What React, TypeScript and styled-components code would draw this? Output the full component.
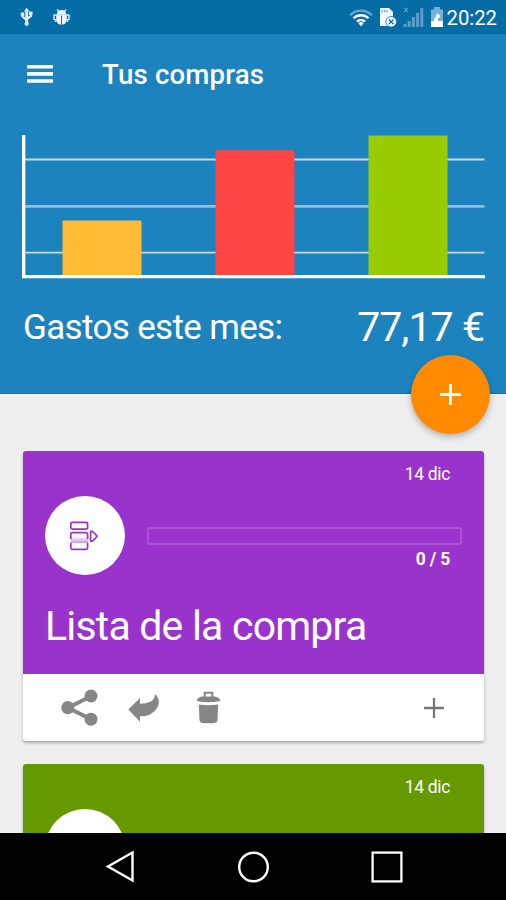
import React from "react";
import styled, { createGlobalStyle } from "styled-components";

const GlobalStyle = createGlobalStyle`
  * { box-sizing: border-box; }
  body { margin: 0; background: #eee; }
  svg { display: block; }
  button { border: 0; padding: 0; background: none; cursor: pointer; }
`;

const Screen = styled.div`
  display: flex;
  flex-direction: column;
  width: 506px;
  height: 900px;
  overflow: hidden;
  background: #eeeeee;
  color: #fff;
  font-family: Roboto, "Liberation Sans", sans-serif;
`;

const StatusBar = styled.div`
  display: flex;
  flex: none;
  justify-content: space-between;
  align-items: center;
  height: 34px;
  padding: 0 9px 0 20px;
  background: #056ca6;
`;

const StatusGroup = styled.div<{ $gap: number }>`
  display: flex;
  align-items: center;
  gap: ${(p) => p.$gap}px;
`;

const StatusIcons = styled(StatusGroup)`
  padding-top: 1px;
`;

const Clock = styled.span`
  font-size: 20.3px;
  line-height: 34px;
  margin: 1px 0 0 -4px;
`;

const Header = styled.header`
  position: relative;
  flex: none;
  height: 360px;
  background: #1c83be;
  border-bottom: 1px solid #0b78b6;
`;

const AppBar = styled.div`
  display: flex;
  align-items: center;
  height: 80px;
  padding-left: 27px;
`;

const MenuButton = styled.button`
  width: 26px;
  height: 18px;
`;

const Title = styled.h1`
  margin: 2px 0 0 49px;
  font-size: 27.6px;
  font-weight: 500;
  line-height: 40px;
  letter-spacing: 0.2px;
  white-space: nowrap;
`;

const ChartArea = styled.div`
  margin: 21px 0 0 22px;
  height: 144px;
`;

const Summary = styled.div`
  display: flex;
  justify-content: space-between;
  height: 60px;
  margin-top: 18px;
  padding: 0 22px 0 23px;
  white-space: nowrap;
`;

const SummaryLabel = styled.span`
  font-size: 35px;
  letter-spacing: -0.66px;
  line-height: 61px;
`;

const SummaryAmount = styled.span`
  font-size: 41px;
  letter-spacing: -0.95px;
  line-height: 61px;
`;

const AddFab = styled.button`
  position: absolute;
  right: 16px;
  bottom: -41px;
  z-index: 1;
  display: flex;
  align-items: center;
  justify-content: center;
  width: 79px;
  height: 79px;
  border-radius: 50%;
  background: #ff8a00;
  box-shadow: 0 3px 6px rgba(0, 0, 0, 0.26);
`;

const Lists = styled.main`
  display: flex;
  flex: 1;
  flex-direction: column;
  gap: 23px;
  min-height: 0;
  overflow: hidden;
  padding: 57px 22px 0 23px;
`;

const Card = styled.article`
  flex: none;
  height: 290px;
  border-radius: 3px;
  background: #fff;
  box-shadow: 0 2px 3px rgba(0, 0, 0, 0.28);
`;

const CardTop = styled.div<{ $color: string }>`
  height: 223px;
  padding: 12px 22px 0;
  border-radius: 3px 3px 0 0;
  background: ${(p) => p.$color};
`;

const CardDate = styled.div`
  height: 24px;
  padding-right: 12px;
  font-size: 17.5px;
  letter-spacing: -0.35px;
  line-height: 23px;
  text-align: right;
`;

const ProgressRow = styled.div`
  display: flex;
  gap: 22px;
  height: 80px;
  margin-top: 9px;
`;

const Avatar = styled.div`
  display: flex;
  flex: none;
  align-items: center;
  justify-content: center;
  width: 80px;
  height: 79px;
  padding-right: 2px;
  border-radius: 50%;
  background: #fff;
`;

const ProgressColumn = styled.div`
  flex: 1;
  padding-top: 31px;
`;

const ProgressTrack = styled.div`
  height: 18px;
  border: 2px solid rgba(255, 255, 255, 0.16);
  border-radius: 3px;
`;

const ProgressCount = styled.div`
  padding-right: 12px;
  margin-top: 2px;
  font-size: 17.5px;
  font-weight: 700;
  letter-spacing: -0.2px;
  line-height: 24px;
  text-align: right;
`;

const CardTitle = styled.h2`
  margin: 22px 0 0;
  font-size: 41px;
  font-weight: 400;
  letter-spacing: -0.8px;
  line-height: 56px;
  white-space: nowrap;
`;

const CardActions = styled.div`
  display: flex;
  align-items: center;
  height: 67px;
  padding: 0 40px 0 38px;
`;

const ActionButton = styled.button<{ $gap?: number; $end?: boolean }>`
  margin-left: ${(p) => (p.$end ? "auto" : `${p.$gap ?? 0}px`)};
`;

const NavBar = styled.nav`
  display: flex;
  flex: none;
  justify-content: space-between;
  align-items: center;
  height: 67px;
  padding: 0 103px 0 105px;
  background: #000;
`;

const UsbIcon = () => (
  <svg width="13" height="20" viewBox="0 0 13 20" fill="none" stroke="#e4edf8">
    <path d="M6.7 3v13" strokeWidth="2.8" />
    <path d="M2.5 7v2.5L6.500 13M11 6v3L6.800 12" strokeWidth="2.2" />
    <path d="M4 4.5 6.7.5l2.700 4zM.8 5.500h3.500V9H.8zM9 4.500h3.500V8H9z" fill="#e4edf8" stroke="none" />
    <circle cx="6.7" cy="16.8" r="2.1" fill="#e4edf8" stroke="none" />
  </svg>
);

const BugIcon = () => (
  <svg width="17" height="18" viewBox="0 0 17 18">
    <path d="M4 1.5l2 2.3M13 1.500l-2 2.300M1 7h15M1 6.500v5.500M16 6.500v5.500M2.500 14v-3M14.500 14v-3" stroke="#d8e5f4" strokeWidth="1.5" />
    <path d="M3.800 6.500a4.700 4.600 0 0 1 9.400 0z" fill="#f3f7fd" />
    <path d="M3.200 7.300h4.800v9.400a5 5 0 0 1-4.800-5zM9 7.300h4.800v4.400a5 5 0 0 1-4.800 5z" fill="#f3f7fd" />
  </svg>
);

const WifiIcon = () => (
  <svg width="24" height="18" viewBox="0 0 24 18" fill="none">
    <path d="M1 6.3a15.5 15.5 0 0 1 22 0" stroke="#6ba9d2" strokeWidth="2.2" />
    <path d="M4.5 9.3a10.7 10.7 0 0 1 15 0M8 12.6a5.8 5.8 0 0 1 8 0" stroke="#fff" strokeWidth="2.3" />
    <path d="m9.4 14.2 2.6 3 2.6-3a4 4 0 0 0-5.2 0z" fill="#fff" />
  </svg>
);

const SimIcon = () => (
  <svg width="18" height="21" viewBox="0 0 18 21">
    <path d="M1 1h9l4 4v14H1z" fill="#f4f8fd" />
    <path d="M3.2 3v2.4M5.6 3v2.4M8 3v2.4" stroke="#6da5cd" strokeWidth="1.2" />
    <circle cx="12.200" cy="14.800" r="5.300" fill="#f4f8fd" stroke="#056ca6" strokeWidth="0.8" />
    <path d="m9.900 12.500 4.600 4.600m0-4.600-4.600 4.600" stroke="#056ca6" strokeWidth="1.3" />
  </svg>
);

const SignalIcon = () => (
  <svg width="21" height="21" viewBox="0 0 21 21">
    <path d="m1.300 .8 3.400 4.400m0-4.400-3.400 4.400" stroke="#5b9dca" strokeWidth="1.2" />
    <path d="M.5 17h3v3h-3zM4.700 14h3v6h-3zM8.900 10h3v10h-3zM13.100 6h3v14h-3zM17.300 1h3v19h-3z" fill="#5b9dca" />
  </svg>
);

const BatteryIcon = () => (
  <svg width="14" height="21" viewBox="0 0 14 21">
    <path d="M4 0h6v2.5h3V15H1V2.5h3z" fill="#78afd4" />
    <path d="M1 14h3.2v-3h1.5V8.6L8 6.2l1.8 2.4V11h-2v3H13v6H1z" fill="#fff" />
  </svg>
);

const MenuIcon = () => (
  <svg width="26" height="18" viewBox="0 0 26 18" fill="#fff">
    <rect width="26" height="3.6" rx=".6" />
    <rect y="7.1" width="26" height="3.6" rx=".6" />
    <rect y="14.2" width="26" height="3.6" rx=".6" />
  </svg>
);

const PlusIcon = ({ size, color, weight }: { size: number; color: string; weight: number }) => (
  <svg width={size} height={size} viewBox={`0 0 ${size} ${size}`}>
    <path
      d={`M${size / 2} 0v${size}M0 ${size / 2}h${size}`}
      stroke={color}
      strokeWidth={weight}
    />
  </svg>
);

const bars = [
  { x: 40.5, top: 85.5, color: "#ffbb33" },
  { x: 193.5, top: 15.3, color: "#ff4444" },
  { x: 346.5, top: 0.5, color: "#99cc00" },
];

const SpendingChart = () => (
  <svg width="463" height="144" viewBox="0 0 463 144">
    <path d="M3 24.5h459.5M3 117.7h459.5" stroke="#c0dcf4" strokeWidth="1.8" />
    <path d="M3 71.3h459.5" stroke="#94bbe0" strokeWidth="2.8" />
    {bars.map((bar) => (
      <rect key={bar.color} x={bar.x} y={bar.top} width="79" height={141 - bar.top} fill={bar.color} />
    ))}
    <path d="M1.6 0v141.6H463" fill="none" stroke="#fff" strokeWidth="3.4" />
  </svg>
);

const ListIcon = ({ color }: { color: string }) => (
  <svg width="30" height="30" viewBox="0 0 30 30" fill="none" stroke={color} strokeWidth="1.7">
    <defs>
      <linearGradient id="fade" x1="0" y1="0" x2="0" y2="1">
        <stop offset="0" stopColor={color} stopOpacity="0.12" />
        <stop offset="1" stopColor={color} stopOpacity="0.5" />
      </linearGradient>
    </defs>
    <rect x="2" y="16.500" width="17" height="5.500" fill="url(#fade)" stroke="none" />
    <rect x="1.8" y="1.3" width="16.8" height="6.8" rx="1.5" />
    <path d="M1.8 18v-4.800q0-1.600 1.600-1.600H17q1.600 0 1.600 1.600V18M1.800 21.700v5q0 1.600 1.600 1.600H17q1.600 0 1.600-1.600v-5" />
    <path d="M21.600 10.300v9.800h1.800q2.200-1.800 4.800-4.900-2.600-3.100-4.800-4.900z" strokeLinejoin="round" />
  </svg>
);

const ShareIcon = () => (
  <svg width="37" height="37" viewBox="0 0 37 37" fill="#868686">
    <path d="M30 7.2 7 18.7l23 11.5" fill="none" stroke="#868686" strokeWidth="4" />
    <circle cx="6.8" cy="18.7" r="6.6" />
    <circle cx="30" cy="7" r="6.5" />
    <circle cx="30" cy="30.2" r="6.5" />
  </svg>
);

const ReplyIcon = () => (
  <svg width="32" height="28" viewBox="0 0 32 28" fill="#868686">
    <path d="M.3 15.500 12 4v5.800C20 9.500 27.500 7 26.700 0c4.500 3 6 10 1.300 15.500-4 5-9.500 7-16 6.800v5.500z" />
  </svg>
);

const TrashIcon = () => (
  <svg width="23" height="33" viewBox="0 0 23 33" fill="#868686">
    <path d="M7.700 6V1.700h7.600V6" fill="none" stroke="#868686" strokeWidth="2" />
    <path d="M0 10V8.700Q1 6 6 5.600h11q5 .4 6 3.100V10q-11.500 2.400-23 0z" />
    <path d="M1.800 13.500q9.700 1.300 19.400 0l-.7 15.800q-.3 2.500-3 2.700-6 .5-12 0-2.700-.2-3-2.700z" />
  </svg>
);

const BackIcon = () => (
  <svg width="31" height="33" viewBox="0 0 31 33">
    <path d="M27.500 2.500v28L3 16.500z" fill="none" stroke="#fff" strokeWidth="2.400" />
  </svg>
);

const HomeIcon = () => (
  <svg width="32" height="32" viewBox="0 0 32 32">
    <circle cx="15.500" cy="16" r="14.300" fill="none" stroke="#fff" strokeWidth="2.400" />
  </svg>
);

const RecentsIcon = () => (
  <svg width="32" height="32" viewBox="0 0 32 32">
    <rect x="1.600" y="1.600" width="28.800" height="28.800" fill="none" stroke="#fff" strokeWidth="2.300" />
  </svg>
);

interface ShoppingList {
  name: string;
  date: string;
  count: string;
  color: string;
}

const shoppingLists: ShoppingList[] = [
  { name: "Lista de la compra", date: "14 dic", count: "0 / 5", color: "#9933cc" },
  { name: "", date: "14 dic", count: "", color: "#669900" },
];

const ShoppingCard = ({ list }: { list: ShoppingList }) => (
  <Card>
    <CardTop $color={list.color}>
      <CardDate>{list.date}</CardDate>
      <ProgressRow>
        <Avatar>
          <ListIcon color={list.color} />
        </Avatar>
        <ProgressColumn>
          <ProgressTrack />
          <ProgressCount>{list.count}</ProgressCount>
        </ProgressColumn>
      </ProgressRow>
      <CardTitle>{list.name}</CardTitle>
    </CardTop>
    <CardActions>
      <ActionButton><ShareIcon /></ActionButton>
      <ActionButton $gap={30}><ReplyIcon /></ActionButton>
      <ActionButton $gap={37}><TrashIcon /></ActionButton>
      <ActionButton $end><PlusIcon size={20} color="#777" weight={2.3} /></ActionButton>
    </CardActions>
  </Card>
);

export default function App() {
  return (
    <Screen>
      <GlobalStyle />
      <StatusBar>
        <StatusGroup $gap={20}>
          <UsbIcon />
          <BugIcon />
        </StatusGroup>
        <StatusIcons $gap={6}>
          <WifiIcon />
          <SimIcon />
          <SignalIcon />
          <BatteryIcon />
          <Clock>20:22</Clock>
        </StatusIcons>
      </StatusBar>
      <Header>
        <AppBar>
          <MenuButton><MenuIcon /></MenuButton>
          <Title>Tus compras</Title>
        </AppBar>
        <ChartArea>
          <SpendingChart />
        </ChartArea>
        <Summary>
          <SummaryLabel>Gastos este mes:</SummaryLabel>
          <SummaryAmount>77,17 €</SummaryAmount>
        </Summary>
        <AddFab><PlusIcon size={21} color="#fff" weight={3} /></AddFab>
      </Header>
      <Lists>
        {shoppingLists.map((list) => (
          <ShoppingCard key={list.color} list={list} />
        ))}
      </Lists>
      <NavBar>
        <BackIcon />
        <HomeIcon />
        <RecentsIcon />
      </NavBar>
    </Screen>
  );
}
